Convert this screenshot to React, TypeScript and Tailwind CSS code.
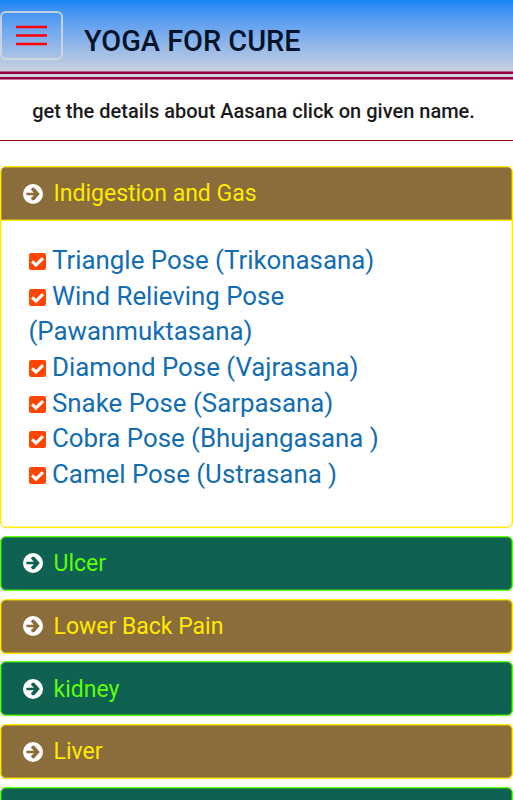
type Ailment = {
  name: string;
  tone: 'brown' | 'green';
};

const poses = [
  'Triangle Pose (Trikonasana)',
  'Wind Relieving Pose (Pawanmuktasana)',
  'Diamond Pose (Vajrasana)',
  'Snake Pose (Sarpasana)',
  'Cobra Pose (Bhujangasana )',
  'Camel Pose (Ustrasana )',
];

const ailments: Ailment[] = [
  { name: 'Ulcer', tone: 'green' },
  { name: 'Lower Back Pain', tone: 'brown' },
  { name: 'kidney', tone: 'green' },
  { name: 'Liver', tone: 'brown' },
];

const tones = {
  brown: 'border-[#ffea00] bg-[#8b6d3b] text-[#ffea00] inset-shadow-[0_0_0_1px_#ffea0066]',
  green: 'border-[#5cff0a] bg-[#0f6151] text-[#5cff0a] inset-shadow-[0_0_0_1px_#5cff0a66]',
};

const ArrowCircle = () => (
  <svg viewBox="0 0 20 20" className="h-5 w-5 shrink-0">
    <circle cx="10" cy="10" r="10" fill="#fff" />
    <path
      d="M3.4 8.7H10.8L7.8 5.6L9.4 3.8H11.2L16.8 10L11.2 16.2H9.4L7.8 14.4L10.8 11.3H3.4Z"
      className="fill-current"
    />
  </svg>
);

const CheckSquare = () => (
  <svg viewBox="0 0 17 17" className="mr-[6.5px] inline-block h-[17px] w-[17px] align-[-1px]">
    <rect width="17" height="17" rx="2.2" fill="#ff4500" />
    <path d="M3.1 8.4L7 12L14 5.1" fill="none" stroke="#fff" strokeWidth="3.1" />
  </svg>
);

const Heading = ({ name, tone }: Ailment) => (
  <div className="flex h-full items-center gap-[11px] pl-[21.5px] text-[23px]">
    <span className={tone === 'brown' ? 'text-[#8b6d3b]' : 'text-[#0f6151]'}>
      <ArrowCircle />
    </span>
    <span className="pt-0.5">{name}</span>
  </div>
);

export default function App() {
  return (
    <div className="h-[800px] w-full overflow-hidden bg-white font-[Roboto,sans-serif]">
      <header>
        <div className="flex h-[71px] items-start bg-linear-to-b from-[#1585f5] to-[#c8d0de] pt-[11px]">
          <button
            type="button"
            aria-label="Menu"
            className="h-[49px] w-[63px] rounded-[6px] border-2 border-[#d5d9df]/85"
          >
            <svg viewBox="0 0 59 45" className="h-[45px] w-[59px]">
              <path
                d="M14 14.1H45M14 22.6H45M14 31.1H45"
                stroke="#ff0008"
                strokeWidth="2.5"
              />
            </svg>
          </button>
          <h1 className="ml-[21px] mt-[10px] text-[28.9px] leading-10 font-medium text-[#03132a]">
            YOGA FOR CURE
          </h1>
        </div>
        <div className="h-[3px] border-t border-[#b0668c] bg-[#99003f]" />
        <div className="h-[3px] bg-[#ced1de]" />
        <div className="h-[3px] border-b border-[#c3799c] bg-[#99003f]" />
      </header>

      <p className="h-[61px] border-b border-[#8b0000] pt-[17px] pr-[6px] text-center text-[20px] leading-7 font-medium text-[#1b1b1b]">
        get the details about Aasana click on given name.
      </p>

      <main className="mt-[25px] flex flex-col gap-[7.8px]">
        <section className="h-[362px] overflow-hidden rounded-[6px] border border-[#ffea00] bg-white shadow-xs inset-shadow-[0_0_0_1px_#ffea0066]">
          <div className={`h-[54px] border-b ${tones.brown}`}>
            <Heading name="Indigestion and Gas" tone="brown" />
          </div>
          <ul className="w-[390px] pt-[22px] pl-[27.5px] text-[25.85px] leading-[35.64px] text-[#126db3]">
            {poses.map((pose) => (
              <li key={pose}>
                <CheckSquare />
                {pose}
              </li>
            ))}
          </ul>
        </section>

        {ailments.map((item) => (
          <section
            key={item.name}
            className={`h-[55px] shrink-0 rounded-[6px] border shadow-xs ${tones[item.tone]}`}
          >
            <Heading {...item} />
          </section>
        ))}
        <section className={`h-[55px] shrink-0 rounded-[6px] border ${tones.green}`} />
      </main>
    </div>
  );
}
